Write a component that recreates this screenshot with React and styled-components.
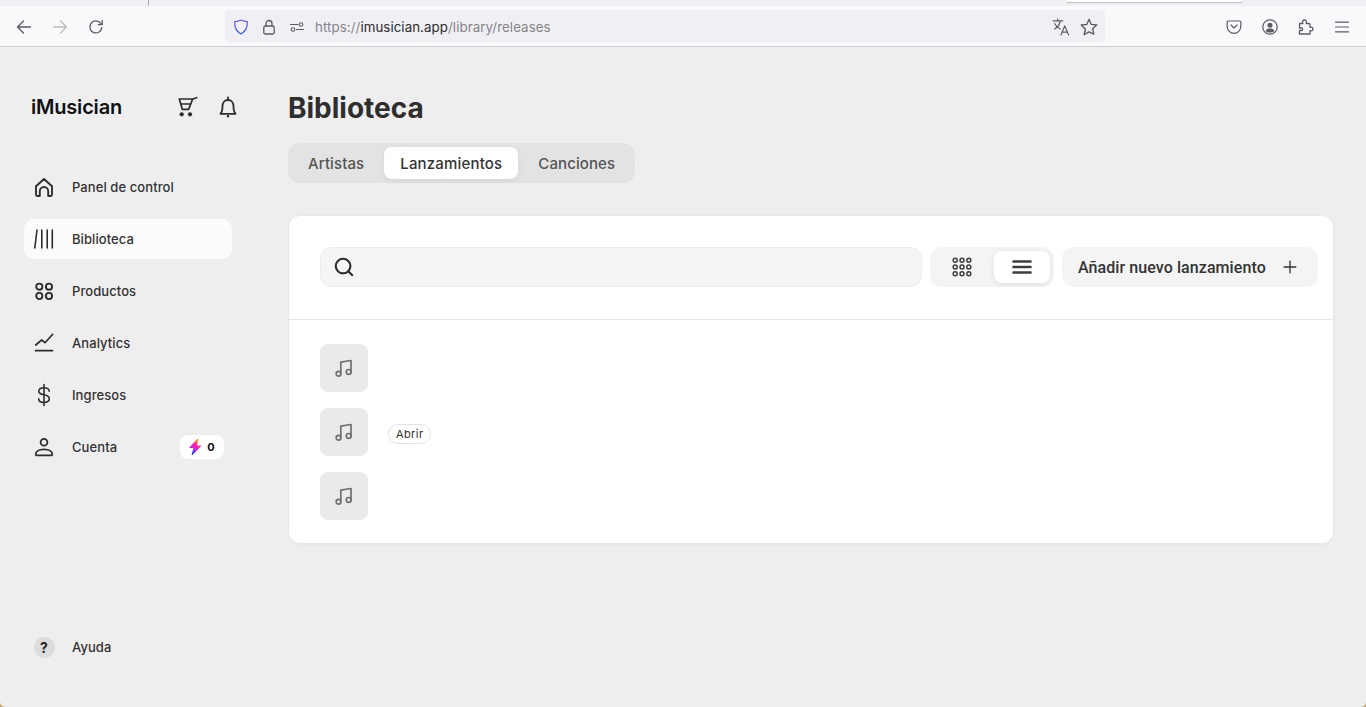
import React from 'react';
import styled, { createGlobalStyle } from 'styled-components';
import { Search, Plus } from 'lucide-react';

const GlobalStyle = createGlobalStyle`
  html, body {
    margin: 0;
    padding: 0;
    height: 100%;
    overflow: hidden;
    background: #c4a468;
    font-family: Inter, "Liberation Sans", sans-serif;
    color: #2e2e2e;
  }
  * { box-sizing: border-box; }
`;

const Window = styled.div`
  width: 1366px;
  height: 707px;
  display: flex;
  flex-direction: column;
  background: #eeeeee;
  border-radius: 0 0 5px 5px;
  overflow: hidden;
`;

/* browser chrome */
const TabStrip = styled.div`
  height: 6px;
  background: #f0f0f4;
  display: flex;
  flex-shrink: 0;
`;
const TabDivider = styled.div`
  width: 1px;
  height: 6px;
  margin-left: 148px;
  background: #a9a9ad;
`;
const ActiveTabEdge = styled.div`
  width: 177px;
  height: 2px;
  margin-left: 917px;
  background: #fff;
  border-radius: 0 0 3px 3px;
  box-shadow: 0 1px 1px rgba(0, 0, 0, 0.22);
`;
const Toolbar = styled.div`
  height: 41px;
  flex-shrink: 0;
  background: #f9f9fb;
  border-bottom: 1px solid #cfcfd2;
  display: flex;
  align-items: center;
  padding-left: 14px;
`;
const ChromeButton = styled.span`
  width: 20px;
  height: 20px;
  margin-top: 1px;
  margin-right: ${p => p.$gap ?? 16}px;
  display: flex;
  align-items: center;
  justify-content: center;
  color: ${p => (p.$off ? '#bcbcc0' : p.$tint || '#5b5b66')};
  flex-shrink: 0;
`;
const UrlBar = styled.div`
  width: 880px;
  height: 32px;
  margin-left: 118px;
  margin-right: 119px;
  padding: 0 6px 0 6px;
  background: #f0f0f4;
  border-radius: 4px;
  display: flex;
  align-items: center;
  flex-shrink: 0;
`;
const UrlText = styled.span`
  flex: 1;
  padding-top: 1px;
  font-size: 13.3px;
  letter-spacing: 0.07px;
  color: #85858c;
  white-space: nowrap;
`;
const UrlHost = styled.span`
  color: #2a2a2e;
`;

/* page */
const Page = styled.div`
  flex: 1;
  display: flex;
  min-height: 0;
`;
const Sidebar = styled.aside`
  width: 288px;
  flex-shrink: 0;
  padding: 47px 24px 40px 24px;
  display: flex;
  flex-direction: column;
`;
const Brand = styled.div`
  display: flex;
  align-items: center;
  height: 26px;
  padding-left: 7px;
  margin-right: 24px;
  margin-bottom: 47px;
`;
const Logo = styled.div`
  flex: 1;
  font-size: 20px;
  font-weight: 600;
  letter-spacing: -0.2px;
  color: #111;
`;
const BrandIcon = styled.span`
  width: 24px;
  height: 24px;
  margin-left: ${p => p.$gap || 0}px;
  display: flex;
  color: #2b2b2b;
`;
const Nav = styled.nav`
  display: flex;
  flex-direction: column;
  gap: 12px;
  width: 208px;
  flex: 1;
`;
const NavItem = styled.div`
  width: 208px;
  height: 40px;
  padding: 0 8px 0 8px;
  display: flex;
  align-items: center;
  gap: 16px;
  border-radius: 10px;
  background: ${p => (p.$active ? '#fbfbfb' : 'transparent')};
  font-size: 13px;
  font-weight: 500;
  letter-spacing: 0.08px;
  color: #333;
`;
const NavIcon = styled.span`
  width: 24px;
  height: 24px;
  display: flex;
  flex-shrink: 0;
  color: #2e2e2e;
`;
const NavLabel = styled.span`
  flex: 1;
`;
const Credits = styled.span`
  width: 44px;
  height: 24px;
  background: #fff;
  border-radius: 8px;
  display: flex;
  align-items: center;
  justify-content: center;
  gap: 5px;
  font-size: 11px;
  font-weight: 700;
  color: #111;
`;
const HelpBadge = styled.span`
  width: 21px;
  height: 21px;
  margin: auto;
  border-radius: 50%;
  background: #dcdcdc;
  display: flex;
  align-items: center;
  justify-content: center;
  font-size: 14px;
  font-weight: 700;
  color: #222;
`;

const Main = styled.main`
  flex: 1;
  min-width: 0;
  padding: 43px 32px 0 0;
`;
const Title = styled.h1`
  margin: 0 0 17px 0;
  font-size: 28px;
  line-height: 36px;
  font-weight: 700;
  color: #2e2e2e;
`;
const Tabs = styled.div`
  display: inline-flex;
  gap: 4px;
  padding: 4px;
  height: 40px;
  background: #e3e3e3;
  border-radius: 12px;
  vertical-align: top;
`;
const Tab = styled.div`
  padding: 0 16px;
  display: flex;
  align-items: center;
  font-size: 15px;
  font-weight: 500;
  letter-spacing: ${p => (p.$active ? '0.18px' : '0.1px')};
  border-radius: 8px;
  color: ${p => (p.$active ? '#333' : '#555')};
  background: ${p => (p.$active ? '#fff' : 'transparent')};
  box-shadow: ${p => (p.$active ? '0 2px 6px rgba(0,0,0,0.06)' : 'none')};
`;
const Card = styled.section`
  margin-top: 32px;
  background: #fff;
  border: 1px solid #e8e8e8;
  border-radius: 12px;
  box-shadow: 0 1px 2px rgba(0, 0, 0, 0.03);
`;
const CardHeader = styled.div`
  height: 104px;
  padding: 31px 15px 0 31px;
  border-bottom: 1px solid #e6e6e6;
  display: flex;
  align-items: flex-start;
  gap: 8px;
`;
const SearchBox = styled.div`
  flex: 1;
  height: 40px;
  padding-left: 12px;
  background: #f5f5f5;
  border: 1px solid #ebebeb;
  border-radius: 12px;
  display: flex;
  align-items: center;
  color: #2e2e2e;
`;
const ViewToggle = styled.div`
  width: 124px;
  height: 40px;
  padding: 4px;
  background: #f4f4f4;
  border-radius: 12px;
  display: flex;
  gap: 4px;
`;
const ViewButton = styled.div`
  flex: ${p => (p.$active ? '0 0 56px' : '1')};
  display: flex;
  align-items: center;
  justify-content: center;
  border-radius: 8px;
  color: #3d3d3d;
  background: ${p => (p.$active ? '#fff' : 'transparent')};
  box-shadow: ${p => (p.$active ? '0 2px 6px rgba(0,0,0,0.08)' : 'none')};
`;
const AddButton = styled.div`
  width: 256px;
  height: 40px;
  padding: 0 18px 0 16px;
  background: #f4f4f4;
  border-radius: 12px;
  display: flex;
  align-items: center;
  justify-content: space-between;
  font-family: Roboto, Inter, sans-serif;
  font-size: 16px;
  font-weight: 500;
  letter-spacing: 0.08px;
  color: #333;
`;
const ReleaseList = styled.div`
  padding: 24px 31px 23px 31px;
  display: flex;
  flex-direction: column;
  gap: 16px;
`;
const ReleaseRow = styled.div`
  display: flex;
  align-items: center;
  gap: 20px;
`;
const Cover = styled.div`
  width: 48px;
  height: 48px;
  border-radius: 8px;
  background: #ebebeb;
  display: flex;
  align-items: center;
  justify-content: center;
  color: #707070;
`;
const Pill = styled.span`
  height: 20px;
  padding: 0 7px;
  border: 1px solid #e2e2e2;
  border-radius: 10px;
  background: #fff;
  display: flex;
  align-items: center;
  font-size: 11px;
  letter-spacing: 0.4px;
  color: #333;
  margin-top: 3px;
`;

/* firefox toolbar icons */
const Stroke = ({ size = 16, sw = 1.3, children }) => (
  <svg width={size} height={size} viewBox="0 0 16 16" fill="none" stroke="currentColor"
    strokeWidth={sw} strokeLinecap="round" strokeLinejoin="round">{children}</svg>
);
const BackIcon = () => <Stroke><path d="M14.5 8H1.8M7.5 2 1.5 8l6 6" /></Stroke>;
const ForwardIcon = () => <Stroke><path d="M1.5 8h12.7M8.5 2l6 6-6 6" /></Stroke>;
const ReloadIcon = () => <Stroke><path d="M13.8 8.600A6 6 0 1 1 12 3.600L14 5.600M14.200 1.600v4h-4" /></Stroke>;
const ShieldIcon = () => (
  <svg width="16" height="16" viewBox="0 0 16 16" fill="none" strokeWidth="1.300" strokeLinejoin="round">
    <defs>
      <linearGradient id="shield" x1="0" y1="0" x2="0" y2="1">
        <stop offset="0" stopColor="#7b5cf0" />
        <stop offset="1" stopColor="#2f5cff" />
      </linearGradient>
    </defs>
    <path d="M8 1c2 1 4 1.500 6.300 1.700.2 5.500-1.500 9.800-6.300 12.300C3.200 12.500 1.500 8.200 1.700 2.700 4 2.500 6 2 8 1z" stroke="url(#shield)" />
  </svg>
);
const LockIcon = () => (
  <Stroke>
    <path d="M5 7V4.500a3 3 0 0 1 6 0V7" />
    <rect x="2.800" y="7" width="10.400" height="8" rx="1.500" />
  </Stroke>
);
const PermissionsIcon = () => (
  <Stroke sw={1.1}>
    <circle cx="12" cy="5.500" r="1.800" />
    <circle cx="4" cy="10.500" r="1.800" />
    <path d="M1.500 5.500h7.500M7.500 10.500h7" />
  </Stroke>
);
const TranslateIcon = () => (
  <Stroke size={18} sw={1.1}>
    <path d="M1 2.500h8.500M5 1v1.500M2.300 9.800c2.800-1.500 4.500-4 5-7.300M2.500 5c.8 2 2.500 3.800 4.700 4.800" />
    <path d="M8 15l3.300-8 3.500 8M9.200 12.600h4.500" />
  </Stroke>
);
const StarIcon = () => (
  <Stroke size={18} sw={1.2}>
    <path d="M8 1.200l2 4.500 4.900.5-3.700 3.300 1.100 4.900L8 12.400l-4.300 2.500 1.100-4.900L1.100 6.200 6 5.700z" />
  </Stroke>
);
const PocketIcon = () => (
  <Stroke sw={1.2}>
    <path d="M2.200 2h11.600c.6 0 1 .4 1 1v4.500a6.800 6.800 0 0 1-13.600 0V3c0-.6.400-1 1-1z" />
    <path d="M5 6l3 3 3-3" />
  </Stroke>
);
const AccountIcon = () => (
  <svg width="16" height="16" viewBox="0 0 16 16" fill="none">
    <circle cx="8" cy="8" r="7.200" stroke="currentColor" strokeWidth="1.200" />
    <circle cx="8" cy="6.300" r="2.500" fill="currentColor" />
    <path d="M3.500 12c1-2 2.500-2.500 4.500-2.500s3.500.5 4.500 2.500c-1.200 1-2.800 1.600-4.500 1.600S4.700 13 3.500 12z" fill="currentColor" />
  </svg>
);
const ExtensionIcon = () => (
  <Stroke sw={1.3}>
    <path d="M1.500 6.500V4.500h3.300C4 2 5.200 1 6.500 1s2.500 1 1.700 3.500h2.800c.6 0 1 .4 1 1v2.800c2.300-.8 3 .5 3 1.700s-.7 2.500-3 1.700V15H1.500v-3.500h2c1.500 0 1.500-2.500 0-2.500h-2z" />
  </Stroke>
);
const MenuIcon = () => <Stroke sw={1.2}><path d="M1.500 3.200h13M1.500 8h13M1.500 12.800h13" /></Stroke>;

/* app icons */
const Line = ({ children, sw = 1.7 }) => (
  <svg width="24" height="24" viewBox="0 0 24 24" fill="none" stroke="currentColor"
    strokeWidth={sw} strokeLinecap="round" strokeLinejoin="round">{children}</svg>
);
const CartIcon = () => (
  <Line sw={1.7}>
    <path d="M4.300 4h13.400l-4 10.300H7.300L4.300 4zM5.800 9h9.900M17.700 4l4-1.300" />
    <circle cx="6.700" cy="19.300" r="2.100" fill="currentColor" stroke="none" />
    <circle cx="15" cy="19.300" r="2.100" fill="currentColor" stroke="none" />
  </Line>
);
const BellIcon = () => (
  <Line sw={1.8}>
    <path d="M4.500 18.800c1.600-1.800 2-3.800 2-7.500 0-3.700 2.200-6.300 5.500-6.300s5.500 2.600 5.500 6.300c0 3.700.4 5.700 2 7.500h-15z" />
    <path d="M12 5V2.500" />
    <circle cx="12" cy="21.300" r="1.200" fill="currentColor" stroke="none" />
  </Line>
);
const HomeIcon = () => (
  <Line sw={1.9}>
    <path d="M4 11.200 12 4l8 7.200v8.300a1.500 1.500 0 0 1-1.500 1.500h-2.300v-4.800a4.200 4.200 0 0 0-8.400 0V21H5.500A1.500 1.500 0 0 1 4 19.500z" />
  </Line>
);
const LibraryIcon = () => (
  <Line sw={1.6}><path d="M2.800 21 5 3M9.800 3v18M15.200 3v18M20.300 3v18" /></Line>
);
const ProductsIcon = () => (
  <Line sw={1.9}>
    <circle cx="7.300" cy="7.700" r="3.100" />
    <circle cx="17" cy="7.700" r="3.100" />
    <circle cx="7.300" cy="17" r="3.100" />
    <circle cx="17" cy="17" r="3.100" />
  </Line>
);
const AnalyticsIcon = () => (
  <Line sw={1.7}><path d="M3.500 19.700h17M3.700 14l6-5 3.300 2.700 7.700-8.400" /></Line>
);
const DollarIcon = () => (
  <Line sw={1.6}>
    <path d="M17.200 8.200c0-2.300-2.200-3.500-5.200-3.500S6.800 6 6.800 8.200s2.400 3 5.200 3.600 5.300 1.500 5.300 4-2.300 3.600-5.300 3.600-5.300-1.300-5.300-3.700M12 1.500v21" />
  </Line>
);
const PersonIcon = () => (
  <Line sw={1.8}>
    <circle cx="12" cy="7.300" r="3.400" />
    <path d="M4.700 20.300c-.6 0-1-.4-1-1 0-3 3.300-5 8.300-5s8.300 2 8.300 5c0 .6-.4 1-1 1z" />
  </Line>
);
const BoltIcon = () => (
  <svg width="13" height="16" viewBox="0 0 13 16">
    <defs>
      <linearGradient id="bolt" x1="0.700" y1="0" x2="0.300" y2="1">
        <stop offset="0.1" stopColor="#ff9d1f" />
        <stop offset="0.38" stopColor="#ff1f9a" />
        <stop offset="0.62" stopColor="#d61ee8" />
        <stop offset="0.88" stopColor="#2b3cf5" />
      </linearGradient>
    </defs>
    <path d="M8 0h1.500L8 6.500h4.700L3.500 16h-1l2-7H0z" fill="url(#bolt)" />
  </svg>
);
const GridIcon = () => (
  <svg width="20" height="20" viewBox="0 0 20 20" fill="none" stroke="currentColor" strokeWidth="1.500">
    {[3.200, 10, 16.800].map(y => [3.200, 10, 16.800].map(x => (
      <circle key={`${x}-${y}`} cx={x} cy={y} r="2" />
    )))}
  </svg>
);
const ListIcon = () => (
  <svg width="20" height="16" viewBox="0 0 20 16" fill="none" stroke="currentColor" strokeWidth="2.600" strokeLinecap="round">
    <path d="M1.500 2.500h17M1.500 8h17M1.500 13.500h17" />
  </svg>
);
const NotesIcon = () => (
  <svg width="20" height="20" viewBox="0 0 20 20" fill="none" stroke="currentColor"
    strokeWidth="1.700" strokeLinecap="round" strokeLinejoin="round">
    <path d="M6.800 15.500V4.200L17 2.500v11.300" />
    <circle cx="4.500" cy="15.700" r="2.400" />
    <circle cx="14.700" cy="13.900" r="2.400" />
  </svg>
);

const navItems = [
  { label: 'Panel de control', icon: <HomeIcon /> },
  { label: 'Biblioteca', icon: <LibraryIcon />, active: true },
  { label: 'Productos', icon: <ProductsIcon /> },
  { label: 'Analytics', icon: <AnalyticsIcon /> },
  { label: 'Ingresos', icon: <DollarIcon /> },
  { label: 'Cuenta', icon: <PersonIcon />, credits: 0 },
];

const App = () => {
  return (
    <Window>
      <GlobalStyle />
      <TabStrip>
        <TabDivider />
        <ActiveTabEdge />
      </TabStrip>
      <Toolbar>
        <ChromeButton><BackIcon /></ChromeButton>
        <ChromeButton $off><ForwardIcon /></ChromeButton>
        <ChromeButton $gap={1}><ReloadIcon /></ChromeButton>
        <UrlBar>
          <ChromeButton $gap={8} $tint="#5b5bf0"><ShieldIcon /></ChromeButton>
          <ChromeButton $gap={8}><LockIcon /></ChromeButton>
          <ChromeButton $gap={8}><PermissionsIcon /></ChromeButton>
          <UrlText>https://<UrlHost>imusician.app</UrlHost>/library/releases</UrlText>
          <ChromeButton $gap={8}><TranslateIcon /></ChromeButton>
          <ChromeButton $gap={0}><StarIcon /></ChromeButton>
        </UrlBar>
        <ChromeButton><PocketIcon /></ChromeButton>
        <ChromeButton><AccountIcon /></ChromeButton>
        <ChromeButton><ExtensionIcon /></ChromeButton>
        <ChromeButton $gap={0}><MenuIcon /></ChromeButton>
      </Toolbar>
      <Page>
        <Sidebar>
          <Brand>
            <Logo>iMusician</Logo>
            <BrandIcon><CartIcon /></BrandIcon>
            <BrandIcon $gap={17}><BellIcon /></BrandIcon>
          </Brand>
          <Nav>
            {navItems.map(item => (
              <NavItem key={item.label} $active={item.active}>
                <NavIcon>{item.icon}</NavIcon>
                <NavLabel>{item.label}</NavLabel>
                {item.credits !== undefined && (
                  <Credits><BoltIcon />{item.credits}</Credits>
                )}
              </NavItem>
            ))}
          </Nav>
          <NavItem>
            <NavIcon><HelpBadge>?</HelpBadge></NavIcon>
            <NavLabel>Ayuda</NavLabel>
          </NavItem>
        </Sidebar>
        <Main>
          <Title>Biblioteca</Title>
          <Tabs>
            <Tab>Artistas</Tab>
            <Tab $active>Lanzamientos</Tab>
            <Tab>Canciones</Tab>
          </Tabs>
          <Card>
            <CardHeader>
              <SearchBox><Search size={22} strokeWidth={2.3} /></SearchBox>
              <ViewToggle>
                <ViewButton><GridIcon /></ViewButton>
                <ViewButton $active><ListIcon /></ViewButton>
              </ViewToggle>
              <AddButton>Añadir nuevo lanzamiento<Plus size={20} strokeWidth={1.6} /></AddButton>
            </CardHeader>
            <ReleaseList>
              <ReleaseRow><Cover><NotesIcon /></Cover></ReleaseRow>
              <ReleaseRow><Cover><NotesIcon /></Cover><Pill>Abrir</Pill></ReleaseRow>
              <ReleaseRow><Cover><NotesIcon /></Cover></ReleaseRow>
            </ReleaseList>
          </Card>
        </Main>
      </Page>
    </Window>
  );
};

export default App;
